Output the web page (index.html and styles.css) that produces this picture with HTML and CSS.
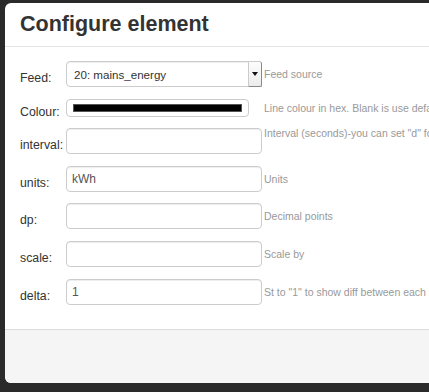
FILE: index.html
```html
<!DOCTYPE html>
<html lang="en">
<head>
  <meta charset="UTF-8" />
  <title>Configure element</title>
  <link rel="stylesheet" href="styles.css">
</head>
<body>

  <!-- Modal dialog over the dashboard -->
  <div class="modal">
    <div class="modal-header">
      <h3>Configure element</h3>
    </div>

    <div class="modal-body">
      <form class="options">
        <label>Feed:</label>
        <div class="select-wrap">
          <select>
            <option>20: mains_energy</option>
          </select>
          <span class="select-arrow"></span>
        </div>
        <span class="help">Feed source</span>

        <label>Colour:</label>
        <input type="color" class="colour" value="#000000">
        <span class="help">Line colour in hex. Blank is use default.</span>

        <label>interval:</label>
        <input type="text" value="">
        <span class="help help-top">Interval (seconds)-you can set "d" for day, "m" for month, or "y" for year</span>

        <label>units:</label>
        <input type="text" value="kWh">
        <span class="help">Units</span>

        <label>dp:</label>
        <input type="text" value="">
        <span class="help">Decimal points</span>

        <label>scale:</label>
        <input type="text" value="">
        <span class="help">Scale by</span>

        <label>delta:</label>
        <input type="text" value="1">
        <span class="help">St to "1" to show diff between each bar</span>
      </form>
    </div>

    <div class="modal-footer"></div>
  </div>

</body>
</html>
```

FILE: styles.css
```css
html, body {
  margin: 0;
  padding: 0;
  height: 100%;
  overflow: hidden;
  font-family: 'Liberation Sans', Arial, sans-serif;
  background: #2a2a2a;
  color: #333;
}

.modal {
  position: absolute;
  top: 3px;
  left: 5px;
  width: 600px;
  height: 380px;
  background: #fff;
  border-radius: 6px;
  display: flex;
  flex-direction: column;
  overflow: hidden;
}

.modal-header {
  padding: 9px 15px;
  border-bottom: 1px solid #e5e5e5;
}

.modal-header h3 {
  margin: 0;
  font-size: 21.5px;
  line-height: 25px;
  font-weight: bold;
  color: #333;
}

.modal-body {
  flex: 1;
  padding: 14px 15px 0;
}

.modal-footer {
  height: 53px;
  background: #f5f5f5;
  border-top: 1px solid #ddd;
}

.options {
  display: grid;
  grid-template-columns: 46px 196px auto;
  row-gap: 11.6px;
  align-items: center;
}

/* label text sits a little below the field's middle */
.options label {
  height: 18px;
  line-height: 26px;
  font-size: 12.3px;
  color: #333;
}

.options input[type="text"],
.options select {
  box-sizing: border-box;
  width: 196px;
  height: 26px;
  margin: 0;
  padding: 0 5px;
  font-family: 'Liberation Sans', Arial, sans-serif;
  font-size: 12px;
  color: #555;
  background: #fff;
  border: 1px solid #ccc;
  border-radius: 4px;
  box-shadow: inset 0 1px 1px rgba(0, 0, 0, 0.075);
  outline: none;
}

.select-wrap {
  position: relative;
  width: 196px;
  height: 26px;
}

.options select {
  -webkit-appearance: none;
  appearance: none;
  padding-left: 7px;
  font-size: 11.6px;
  color: #333;
  border-radius: 4px 2px 2px 4px;
}

.select-arrow {
  position: absolute;
  top: 1px;
  right: 0;
  bottom: 0;
  width: 12px;
  background: linear-gradient(#fdfdfd, #ececec);
  border-left: 1px solid #ccc;
  border-right: 1px solid #888;
  border-bottom: 1px solid #888;
  border-radius: 0 2px 2px 0;
  display: flex;
  align-items: center;
  justify-content: center;
}

.select-arrow::after {
  content: "";
  border-left: 3px solid transparent;
  border-right: 3px solid transparent;
  border-top: 4px solid #111;
}

.options input.colour {
  box-sizing: border-box;
  width: 183px;
  height: 18px;
  margin: 0;
  padding: 4px 6px;
  background: #fff;
  border: 1px solid #ccc;
  border-radius: 4px;
  -webkit-appearance: none;
  appearance: none;
}

.colour::-webkit-color-swatch-wrapper {
  padding: 0;
}

.colour::-webkit-color-swatch {
  border: 1px solid #555;
  border-radius: 0;
}

.help {
  margin-left: 2px;
  font-size: 10.5px;
  line-height: 12px;
  color: #999;
  white-space: nowrap;
}

.help-top {
  align-self: start;
  margin-top: -1px;
}
```
